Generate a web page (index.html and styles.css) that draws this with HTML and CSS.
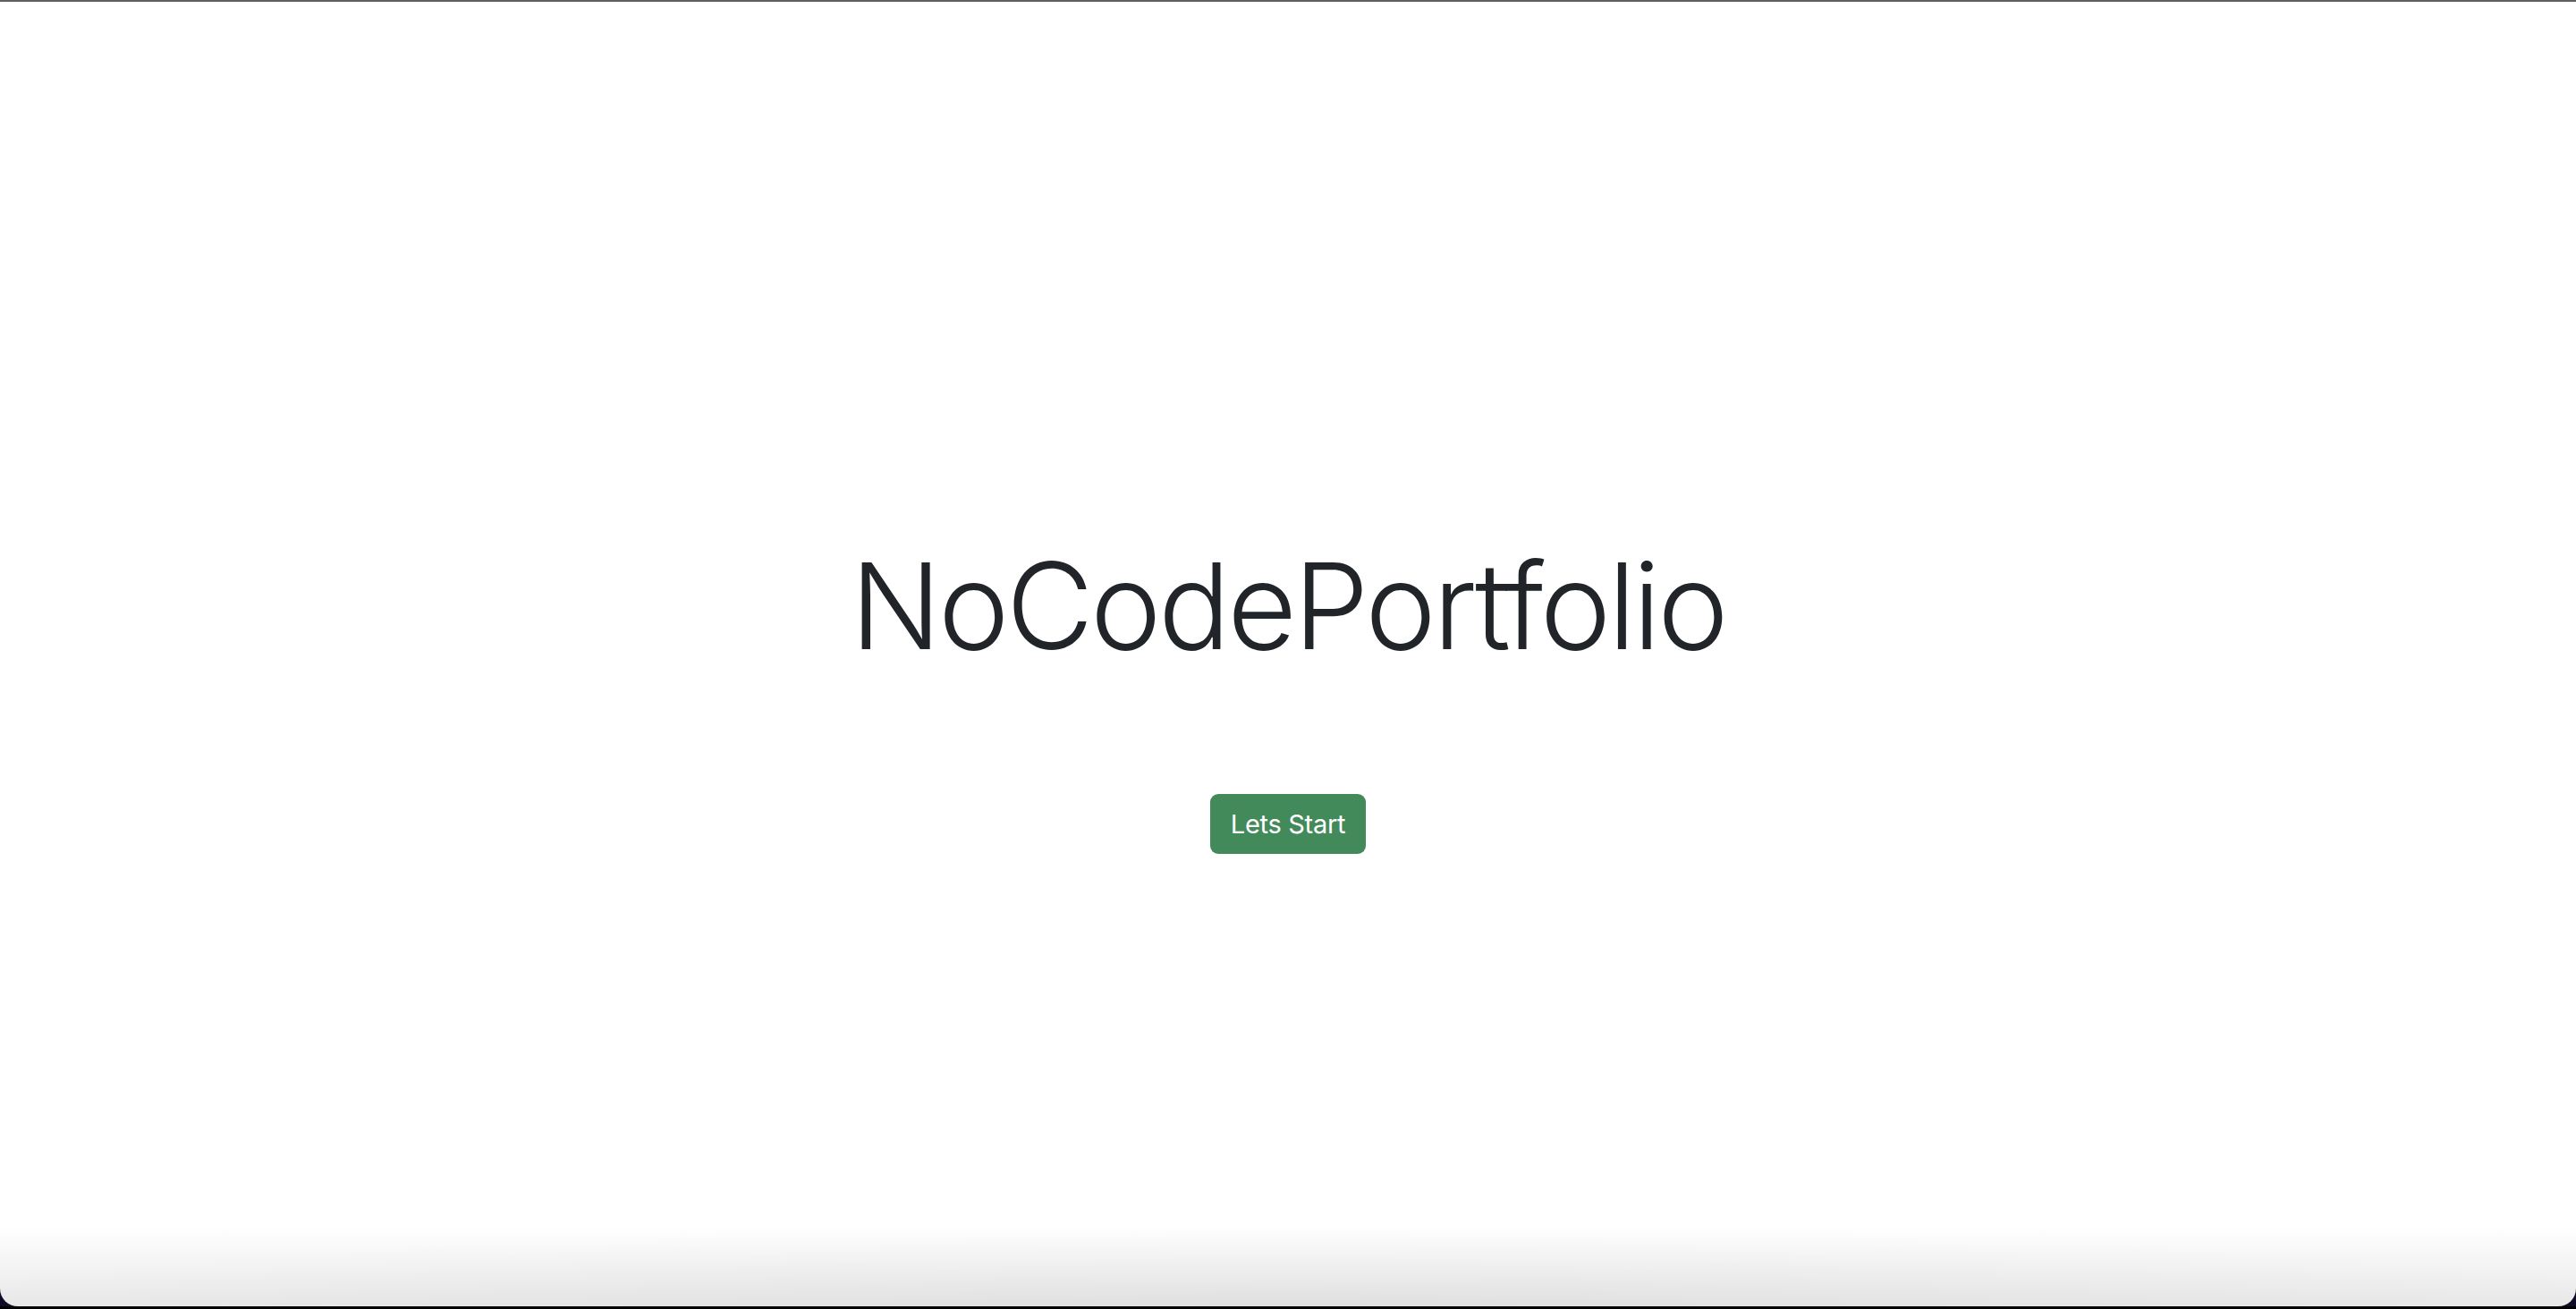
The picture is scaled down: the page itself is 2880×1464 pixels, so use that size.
FILE: index.html
```html
<!DOCTYPE html>
<html lang="en">
<head>
<meta charset="utf-8">
<title>NoCodePortfolio</title>
<link rel="stylesheet" href="styles.css">
</head>
<body>
<div class="window">
  <main class="hero">
    <h1 class="title">NoCodePortfolio</h1>
    <button class="btn-start" type="button">Lets Start</button>
  </main>
</div>
<div class="bottom-strip"></div>
</body>
</html>
```
FILE: styles.css
```css
html, body {
  margin: 0;
  padding: 0;
  height: 100%;
}
body {
  background: #100b26;
  display: flex;
  flex-direction: column;
  font-family: Inter, "Liberation Sans", sans-serif;
  overflow: hidden;
}
.window {
  flex: 1;
  background:
    radial-gradient(ellipse 55% 90px at 50% 100%, rgba(0,0,0,0.04), rgba(0,0,0,0) 100%),
    linear-gradient(to bottom, #ffffff 0, #ffffff calc(100% - 90px), #e8e8e8 100%);
  border-top: 2px solid #5f5f63;
  border-radius: 0 0 20px 20px;
  display: flex;
  flex-direction: column;
}
.bottom-strip {
  height: 3px;
  background: #000;
}
.hero {
  display: flex;
  flex-direction: column;
  align-items: center;
  padding-top: 591px;
}
.title {
  margin: 0;
  font-size: 134px;
  font-weight: 300;
  line-height: 168px;
  color: #212529;
  letter-spacing: -3.5px;
}
.btn-start {
  margin-top: 127px;
  background: #428a5a;
  color: #fff;
  border: 0;
  border-radius: 9px;
  padding: 12px 23px;
  font-family: Inter, "Liberation Sans", sans-serif;
  font-size: 29px;
  line-height: 43px;
  font-weight: 400;
  letter-spacing: -0.3px;
}
```
